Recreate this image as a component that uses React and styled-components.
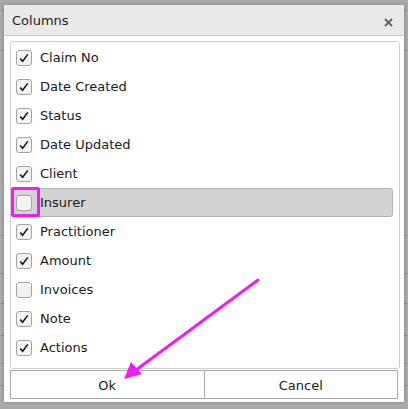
import React from "react";
import styled, { createGlobalStyle } from "styled-components";

const Global = createGlobalStyle`
  html, body { margin: 0; padding: 0; }
  body {
    width: 408px;
    height: 409px;
    overflow: hidden;
    background: #a9a9a9;
    font-family: "DejaVu Sans", Verdana, sans-serif;
  }
`;

/* dimmed page behind the modal */
const Page = styled.div`
  position: relative;
  width: 408px;
  height: 409px;
  display: flex;
  flex-direction: column;
`;

const PageRow = styled.div`
  height: ${(p) => p.$h}px;
  flex: none;
  border-bottom: 1px solid #8f8f8f;
  display: flex;
  align-items: center;
  justify-content: space-between;
  font-size: 12px;
  color: #2a4f86;
`;

const PageGlyph = styled.span`
  font-family: "DejaVu Sans", sans-serif;
  margin-left: ${(p) => (p.$right ? 0 : -3)}px;
  margin-right: ${(p) => (p.$right ? -4 : 0)}px;
`;

const Dialog = styled.div`
  position: absolute;
  left: 4px;
  top: 5px;
  width: 400px;
  height: 397px;
  background: #fff;
  box-shadow: 0 0 3px rgba(0, 0, 0, 0.25);
  display: flex;
  flex-direction: column;
`;

const Header = styled.div`
  height: 30px;
  flex: none;
  background: #e9e9e9;
  border-bottom: 1px solid #c9c9c9;
  display: flex;
  align-items: center;
  justify-content: space-between;
  padding: 0 10px 0 8px;
  font-size: 13px;
  color: #222;
`;

const CloseButton = styled.button`
  border: 0;
  background: none;
  padding: 0;
  width: 12px;
  height: 12px;
  display: flex;
  align-items: center;
  justify-content: center;
  margin-top: 4px;
`;

const Body = styled.div`
  padding: 5px 4px 0 6px;
  display: flex;
  flex-direction: column;
`;

const List = styled.div`
  border: 1px solid #cfcfcf;
  border-radius: 3px;
  height: 326px;
  padding: 1px 6px 0 0;
  box-sizing: border-box;
  height: 328px;
  display: flex;
  flex-direction: column;
`;

const Row = styled.label`
  position: relative;
  height: 29px;
  flex: none;
  box-sizing: border-box;
  display: flex;
  align-items: center;
  gap: 8px;
  padding-left: 4px;
  font-size: 13px;
  color: #1a1a1a;
  border-radius: 3px;
  background: ${(p) => (p.$active ? "#d3d3d3" : "transparent")};
  border: 1px solid ${(p) => (p.$active ? "#b4b4b4" : "transparent")};
`;

const Box = styled.span`
  width: 16px;
  height: 16px;
  box-sizing: border-box;
  border: 1px solid #a3a3a3;
  border-radius: 3px;
  background: #f3f3f3;
  display: flex;
  align-items: center;
  justify-content: center;
  flex: none;
`;

const Marker = styled.span`
  position: absolute;
  left: -1px;
  top: -2px;
  width: 29px;
  height: 30px;
  box-sizing: border-box;
  border: 3px solid #f01cf0;
  border-radius: 2px;
`;

const Buttons = styled.div`
  display: flex;
  margin-top: 1px;
  margin-right: 2px;
`;

const Btn = styled.button`
  flex: 1;
  height: 29px;
  background: #fff;
  border: 1px solid #a8a8a8;
  border-left-width: ${(p) => (p.$joined ? 0 : 1)}px;
  font-family: "DejaVu Sans", Verdana, sans-serif;
  font-size: 13px;
  color: #1a1a1a;
  padding: 2px 0 0;
`;

const Arrow = styled.svg`
  position: absolute;
  left: 0;
  top: 0;
  pointer-events: none;
`;

const Check = () => (
  <svg width="12" height="12" viewBox="0 0 12 12">
    <path d="M2.2 6.4 L4.6 9.2 L9.8 2.4" fill="none" stroke="#111" strokeWidth="1.5" />
  </svg>
);

const columns = [
  ["Claim No", true],
  ["Date Created", true],
  ["Status", true],
  ["Date Updated", true],
  ["Client", true],
  ["Insurer", false, true],
  ["Practitioner", true],
  ["Amount", true],
  ["Invoices", false],
  ["Note", true],
  ["Actions", true],
];

const pageRows = [
  [10], [39], [184], [37, "i", "|"], [29], [31, "i", "i"], [27], [21, "i", "i"], [30],
];

export default function App() {
  return (
    <>
      <Global />
      <Page>
        {pageRows.map(([h, l, r], i) => (
          <PageRow key={i} $h={h}>
            <PageGlyph>{l || ""}</PageGlyph>
            <PageGlyph $right>{r || ""}</PageGlyph>
          </PageRow>
        ))}

        <Dialog>
          <Header>
            <span>Columns</span>
            <CloseButton aria-label="close">
              <svg width="9" height="9" viewBox="0 0 9 9">
                <path d="M1 1 L8 8 M8 1 L1 8" stroke="#666" strokeWidth="2" />
              </svg>
            </CloseButton>
          </Header>
          <Body>
            <List>
              {columns.map(([name, on, active]) => (
                <Row key={name} $active={active}>
                  {active && <Marker />}
                  <Box>{on && <Check />}</Box>
                  <span>{name}</span>
                </Row>
              ))}
            </List>
            <Buttons>
              <Btn>Ok</Btn>
              <Btn $joined>Cancel</Btn>
            </Buttons>
          </Body>
        </Dialog>

        <Arrow width="408" height="409" viewBox="0 0 408 409">
          <line x1="258" y1="280" x2="136" y2="370" stroke="#f01cf0" strokeWidth="3" strokeLinecap="round" />
          <polygon points="124,379 131,362 142,374" fill="#f01cf0" />
        </Arrow>
      </Page>
    </>
  );
}
